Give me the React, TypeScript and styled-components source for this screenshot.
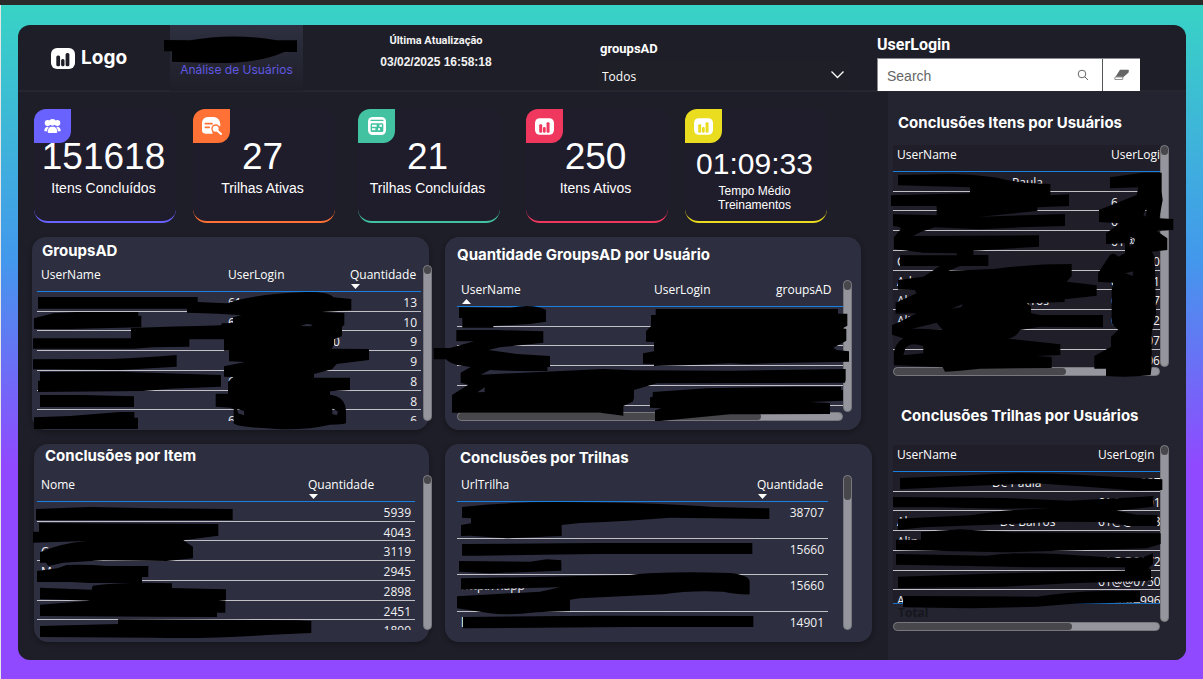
import React from "react";
import styled, { createGlobalStyle } from "styled-components";

const GlobalStyle = createGlobalStyle`
  *, *::before, *::after { box-sizing: border-box; }
  body {
    margin: 0;
    background: #2a2a2a;
    color: #ffffff;
    font-family: "Open Sans", "Noto Sans", sans-serif;
    font-size: 12px;
  }
  h1, h2, p { margin: 0; }
`;

const sans = `"Liberation Sans", Arial, sans-serif`;
const inter = `Inter, "Liberation Sans", sans-serif`;
const roboto = `Roboto, "Liberation Sans", sans-serif`;

const Backdrop = styled.div`
  margin-top: 5px;
  min-height: calc(100vh - 5px);
  padding: 20px 17px 19px;
  border-left: 1px solid #e6e6e6;
  background: linear-gradient(180deg, #38d3c5 0px, #4398ec 255px, #9049ff 460px, #9049ff 100%);
`;

const Dashboard = styled.div`
  position: relative;
  border-radius: 12px;
  background: #1e1e28;
  overflow: hidden;
`;

/* ---------- header ---------- */

const Header = styled.header`
  display: grid;
  grid-template-columns: 152px 133px minmax(200px, 1fr) 280px 263px;
  height: 67px;
  padding-right: 46px;
  border-bottom: 2px solid #252630;
`;

const Brand = styled.div`
  display: flex;
  align-items: center;
  gap: 6px;
  padding-left: 33px;
  font: 700 19px/24px ${inter};
`;

const PageBadge = styled.div`
  position: relative;
  padding-top: 36px;
  background: linear-gradient(180deg, #2e3040, #1e1e28);
  color: #6058e0;
  text-align: center;
`;

const PageName = styled.h1`
  font: 400 12px/18px ${inter};
  white-space: nowrap;
`;

const Updated = styled.div`
  padding: 6px 28px 0 0;
  text-align: center;
  color: #f2f2f2;
`;

const UpdatedLabel = styled.p`
  font: 700 11px/20px ${roboto};
`;

const UpdatedValue = styled.p`
  font: 700 12px/22px ${sans};
`;

const GroupFilter = styled.div`
  display: flex;
  flex-direction: column;
  padding: 12px 28px 0 0;
`;

const GroupLabel = styled.label`
  padding-left: 3px;
  font: 700 13px/24px ${roboto};
`;

const SelectBox = styled.div`
  position: relative;
`;

const Select = styled.select`
  display: block;
  width: 100%;
  height: 29px;
  padding: 2px 24px 0 5px;
  border: 0;
  appearance: none;
  background: #1f2027;
  color: #ffffff;
  font: 400 12px/18px "Open Sans", sans-serif;
`;

const SelectArrow = styled.svg`
  position: absolute;
  right: 4px;
  top: 9px;
  pointer-events: none;
`;

const LoginFilter = styled.div`
  padding-top: 7px;
`;

const LoginLabel = styled.label`
  display: block;
  font: 700 16px/26px ${roboto};
`;

const SearchBar = styled.form`
  display: flex;
  height: 33px;
  border: 1px solid #8a8a90;
  border-width: 1px 0 0 1px;
  background: #ffffff;
`;

const SearchInput = styled.input`
  flex: 1;
  min-width: 0;
  padding: 2px 0 0 9px;
  border: 0;
  background: transparent;
  color: #333333;
  font: 400 14px/20px ${sans};
  &::placeholder { color: #666666; opacity: 1; }
`;

const IconButton = styled.button<{ $width: number; $divided?: boolean }>`
  display: flex;
  align-items: center;
  justify-content: center;
  width: ${(p) => p.$width}px;
  padding: 0;
  border: 0;
  border-left: ${(p) => (p.$divided ? "1px solid #55555c" : "0")};
  background: transparent;
  color: #666666;
`;

/* ---------- body ---------- */

const Body = styled.div`
  display: grid;
  grid-template-columns: minmax(0, 1fr) 298px;
`;

const Main = styled.main`
  padding: 17px 0 18px;
`;

const Cards = styled.section`
  display: grid;
  grid-template-columns: 159fr 165fr 168fr 159fr 142fr;
  padding: 0 61px 0 16px;
`;

const Card = styled.article<{ $color: string; $compact?: boolean }>`
  position: relative;
  width: 142px;
  height: 114px;
  padding: ${(p) => (p.$compact ? 38 : 28)}px 3px 0 0;
  border-bottom: 2px solid ${(p) => p.$color};
  border-radius: 14px;
  background: #1f1c2b;
  text-align: center;
`;

const CardIcon = styled.div<{ $color: string }>`
  position: absolute;
  left: 0;
  top: 0;
  display: flex;
  align-items: center;
  justify-content: center;
  width: 37px;
  height: 34px;
  border-radius: 12px 0;
  background: ${(p) => p.$color};
`;

const CardValue = styled.p<{ $compact?: boolean }>`
  position: relative;
  font: 400 ${(p) => (p.$compact ? "30px/34px" : "37px/40px")} ${sans};
`;

const CardLabel = styled.h2<{ $compact?: boolean }>`
  margin: 3px auto 0;
  max-width: ${(p) => (p.$compact ? "90px" : "none")};
  font: 400 ${(p) => (p.$compact ? "12px/14px" : "14px/16px")} ${sans};
`;

const TopRow = styled.div`
  display: grid;
  grid-template-columns: 397fr 416fr;
  gap: 16px;
  margin-top: 14px;
  padding: 0 27px 0 14px;
`;

const BottomRow = styled.div`
  display: grid;
  grid-template-columns: 395fr 427fr;
  gap: 16px;
  margin-top: 14px;
  padding: 0 16px;
`;

const Panel = styled.section<{ $pad: string }>`
  position: relative;
  min-width: 0;
  padding: ${(p) => p.$pad};
  border-radius: 14px;
  background: #2d2f40;
  box-shadow: 0 2px 5px rgba(10, 10, 16, 0.45);
`;

const Sidebar = styled.aside`
  padding: 19px 17px 0 5px;
  background: #232430;
`;

const SideBlock = styled.section`
  position: relative;
  margin-bottom: 28px;
`;

const Title = styled.h2<{ $indent: number; $line: number; $gap: number }>`
  padding-left: ${(p) => p.$indent}px;
  margin-bottom: ${(p) => p.$gap}px;
  font: 700 15px/${(p) => p.$line}px ${inter};
  white-space: nowrap;
`;

/* ---------- tables ---------- */

const TableArea = styled.div<{ $gap: number; $bleed?: boolean }>`
  display: flex;
  gap: ${(p) => p.$gap}px;
  margin-right: ${(p) => (p.$bleed ? -3 : 0)}px;
`;

const TableColumn = styled.div`
  flex: 1;
  min-width: 0;
`;

const Viewport = styled.div<{ $height: number; $dark?: boolean }>`
  height: ${(p) => p.$height}px;
  overflow: hidden;
  background: ${(p) => (p.$dark ? "#1f1e29" : "transparent")};
`;

const Table = styled.table`
  width: 100%;
  border-collapse: separate;
  border-spacing: 0;
  table-layout: fixed;
`;

const Th = styled.th`
  height: 27px;
  padding: 0 4px;
  border-bottom: 1px solid #1a7fe0;
  font-weight: 400;
  line-height: 19px;
  text-align: left;
  vertical-align: top;
  white-space: nowrap;
`;

const SortMark = styled.svg`
  display: block;
  margin-left: 1px;
`;

const Row = styled.tr<{ $tall?: boolean }>`
  height: ${(p) => (p.$tall ? 37 : 20)}px;
  &:nth-child(4n + 2) { height: ${(p) => (p.$tall ? 36 : 19)}px; }
`;

const Td = styled.td<{ $right?: boolean }>`
  padding: 3px 4px 0;
  border-bottom: 1px solid #c0c0c5;
  line-height: 15px;
  text-align: ${(p) => (p.$right ? "right" : "left")};
  vertical-align: top;
  white-space: nowrap;
  overflow: hidden;
  color: #f1f1f3;
`;

const Fragment = styled.span<{ $gap: number }>`
  padding-left: ${(p) => p.$gap}px;
`;

const TotalRow = styled.div`
  height: 19px;
  padding-left: 5px;
  border-top: 1px solid #1b6fc0;
  color: #16161c;
  font-weight: 700;
  line-height: 18px;
`;

const Track = styled.div<{ $axis: "x" | "y" }>`
  flex: none;
  display: flex;
  width: ${(p) => (p.$axis === "y" ? "9px" : "100%")};
  height: ${(p) => (p.$axis === "x" ? "9px" : "auto")};
  border: 1px solid #77777d;
  border-radius: 5px;
  background: #95969d;
`;

const Thumb = styled.div<{ $axis: "x" | "y"; $size: string }>`
  width: ${(p) => (p.$axis === "x" ? p.$size : "7px")};
  height: ${(p) => (p.$axis === "y" ? p.$size : "7px")};
  border-radius: 4px;
  background: #47474c;
`;

const TrackCorner = styled.div`
  flex: none;
  width: 9px;
`;

const Marker = styled.svg`
  position: absolute;
  left: 0;
  top: 0;
  z-index: 2;
  overflow: visible;
  pointer-events: none;
`;

type Part = [number, string];
type Cell = string | Part[];
type Column = { name: string; width?: string; right?: boolean; sort?: "up" | "down" };

type DataTableProps = {
  columns: Column[];
  rows: Cell[][];
  height: number;
  gap: number;
  thumb: string;
  bleed?: boolean;
  tall?: boolean;
  dark?: boolean;
  total?: boolean;
  xThumb?: string;
};

function DataTable({ columns, rows, height, gap, thumb, bleed, tall, dark, total, xThumb }: DataTableProps) {
  return (
    <>
      <TableArea $gap={gap} $bleed={bleed}>
        <TableColumn>
          <Viewport $height={height} $dark={dark}>
            <Table>
              <colgroup>
                {columns.map((c) => (
                  <col key={c.name} width={c.width} />
                ))}
              </colgroup>
              <thead>
                <tr>
                  {columns.map((c) => (
                    <Th key={c.name} scope="col">
                      {c.name}
                      {c.sort && (
                        <SortMark width="9" height="5" viewBox="0 0 9 5" aria-hidden="true">
                          <path d={c.sort === "down" ? "M0 0H9L4.5 5Z" : "M0 5H9L4.5 0Z"} fill="#fff" />
                        </SortMark>
                      )}
                    </Th>
                  ))}
                </tr>
              </thead>
              <tbody>
                {rows.map((row, r) => (
                  <Row key={r} $tall={tall}>
                    {columns.map((c, i) => {
                      const cell = row[i] ?? "";
                      return (
                        <Td key={c.name} $right={c.right}>
                          {typeof cell === "string"
                            ? cell
                            : cell.map(([g, text], k) => (
                                <Fragment key={k} $gap={g}>
                                  {text}
                                </Fragment>
                              ))}
                        </Td>
                      );
                    })}
                  </Row>
                ))}
              </tbody>
            </Table>
          </Viewport>
          {total && <TotalRow>Total</TotalRow>}
        </TableColumn>
        <Track $axis="y" aria-hidden="true">
          <Thumb $axis="y" $size={thumb} />
        </Track>
      </TableArea>
      {xThumb && (
        <TableArea $gap={gap} aria-hidden="true">
          <TableColumn>
            <Track $axis="x">
              <Thumb $axis="x" $size={xThumb} />
            </Track>
          </TableColumn>
          <TrackCorner />
        </TableArea>
      )}
    </>
  );
}

function Redaction({ width, height, view, paths }: { width: number; height: number; view: string; paths: string[] }) {
  return (
    <Marker width={width} height={height} viewBox={view} aria-hidden="true">
      {paths.map((d, i) => (
        <path key={i} d={d} fill="#000" fillRule="evenodd" />
      ))}
    </Marker>
  );
}

/* ---------- icons ---------- */

function BarsMark({ width, height, bars }: { width: number; height: number; bars: string }) {
  return (
    <svg width={width} height={height} viewBox="0 0 24 21" aria-hidden="true">
      <rect width="24" height="21" rx="6" fill="#fff" />
      <rect x="5.3" y="7.5" width="3.8" height="10.8" rx="1.5" fill={bars} />
      <rect x="10.1" y="11" width="3.4" height="7.3" rx="1.5" fill={bars} />
      <rect x="14.6" y="5" width="3.8" height="13.3" rx="1.5" fill={bars} />
    </svg>
  );
}

function PeopleIcon() {
  return (
    <svg width="17" height="14" viewBox="0 0 49 42" fill="#fff" aria-hidden="true">
      <circle cx="10" cy="12" r="9" />
      <circle cx="39" cy="12" r="9" />
      <circle cx="24.5" cy="10" r="10" />
      <path d="M0 36Q0 24 9 23L13 24Q9 29 8 37H2Q0 37 0 36Z" />
      <path d="M49 36Q49 24 40 23L36 24Q40 29 41 37H47Q49 37 49 36Z" />
      <path d="M10 38Q11 26 19 23H30Q38 26 39 38Q39 42 35 42H14Q10 42 10 38Z" />
    </svg>
  );
}

function SearchDocIcon({ color }: { color: string }) {
  return (
    <svg width="20" height="18" viewBox="0 0 60 54" aria-hidden="true">
      <path d="M0 20Q0 0 18 0H36Q54 2 55 22V28H34Q28 34 32 50H10Q0 50 0 40Z" fill="#fff" />
      <path d="M10 20H30M10 31H22" stroke={color} strokeWidth="5" strokeLinecap="round" />
      <circle cx="41" cy="35" r="13" fill={color} />
      <circle cx="41" cy="35" r="9" fill="#fff" />
      <path d="M47 42L57 51" stroke="#fff" strokeWidth="6" strokeLinecap="round" />
    </svg>
  );
}

function BoardIcon({ color }: { color: string }) {
  return (
    <svg width="18" height="18" viewBox="0 0 54 54" aria-hidden="true">
      <rect width="54" height="54" rx="14" fill="#fff" />
      <path d="M9 10H45" stroke={color} strokeWidth="4" strokeLinecap="round" />
      <rect x="8" y="19" width="38" height="26" rx="4" fill={color} />
      <path d="M12 26H26M34 26H42M12 37H22M30 37H36" stroke="#fff" strokeWidth="6" />
    </svg>
  );
}

/* ---------- data ---------- */

const groupRows: Cell[][] = [
  ["", "61", "13"],
  ["", "6", "10"],
  ["", [[105, "0"]], "9"],
  ["", "", "9"],
  ["", "6", "8"],
  ["", "", "8"],
  ["", "6", "6"],
];

const userGroupRows: Cell[][] = [[], [], [], [], [], []];

const itemRows: Cell[][] = [
  ["", "5939"],
  ["", "4043"],
  ["C", "3119"],
  ["Ma", "2945"],
  ["", "2898"],
  ["", "2451"],
  ["", "1809"],
];

const trailRows: Cell[][] = [
  ["", "38707"],
  ["", "15660"],
  [[[0, "http://happ"]], "15660"],
  ["l", "14901"],
];

const itemUserRows: Cell[][] = [
  [[[115, "Paula"]], ""],
  ["", "6"],
  ["", "61@@04"],
  ["", "61@@02"],
  ["C", "61@@20"],
  ["Ad", "61@@11"],
  [[[0, "Al"], [112, "arros"]], "61@@37"],
  ["Ali", "61@@02"],
  ["", "61@@07"],
  ["", "61@@06"],
];

const trailUserRows: Cell[][] = [
  [[[95, "De Paula"]], "61@@0027"],
  ["", "61@@0091"],
  [[[0, "Al"], [92, "De Barros"]], "61@@0008"],
  ["Alin", ""],
  ["", "61@@0172"],
  ["", "61@@0750"],
  ["A", "61@@4996"],
];

const marks = {
  header: ["M492 120L570 121Q700 98 830 121H891V156H852Q780 190 640 189L516 185V154H492Z"],
  groups: [
    "M54 201H533V216L620 220Q700 192 860 186Q930 186 940 202L994 207V241L905 246L973 249V284L966 290V318L942 328V345L934 356L1047 357V390L950 402L936 418L882 432V443L990 443V480L930 484V494Q978 500 978 545V580Q970 584 930 584Q850 602 760 596Q650 592 641 580V536H634V533L587 530V491H624V455L640 442L612 440V409L675 396L627 394V362L612 362V328L508 328V350L400 352L340 356H39V325H333V294Q460 290 603 286L606 280L639 279V262L665 256Q600 250 501 248V236H54ZM652 537L672 543V556L654 550ZM937 535L954 545L950 556L937 552ZM842 288L860 282L878 284L872 289Z",
    "M42 265L100 250L170 246H355V257H364V292L150 297H42Z",
    "M39 388L270 387Q380 383 470 375V410L300 420L100 418H39Z",
    "M60 426L300 425L603 435V470L450 476L370 483L54 486V452H60Z",
    "M60 495H190L342 499V531H60Z",
    "M42 562L150 558L300 546H343V563H354V597H42Z",
  ],
  userGroups: [
    "M87 232L240 234Q310 220 348 240V275L300 282L190 288V293H97V264H87Z",
    "M79 300H200L340 304V338L210 352L175 360L260 372L360 378V411H352V423Q250 424 180 420L152 434L520 417L610 421L900 422L1247 417V450L1245 458L680 460L645 470L612 480V505L608 515L580 528V557L540 552L510 548H66V495L115 464L92 458V428L122 411Q60 405 48 388H11V354H60L132 334H79ZM142 487L164 472V486Z",
    "M677 237H1224V251H1252V287L1238 295L1249 297V332L1210 353L1220 360L1257 364V395L1050 399L950 402L900 400L780 405L672 408V402L639 401V370L672 364V336L648 335V304L663 288V255H677Z",
    "M668 486L830 475L1100 470H1233V480H1239V512L1140 516L1200 519V552L900 553L690 573H675V541L694 535L660 533V502L668 500Z",
  ],
  items: [
    "M48 222L210 216L400 220L638 222V255H48Z",
    "M57 264L595 267V302L490 316L519 335V370L440 378L250 376L130 383L85 393L78 383H60V352Q120 325 200 318L39 323V290H57Z",
    "M51 408L112 400L140 390Q200 388 260 393H385V426H366V444H210L150 441H51Z",
    "M60 458L215 464L218 452Q320 440 456 445V459L618 463V496L595 498H616V533H591V546L400 545L60 543V509L210 497L60 492Z",
    "M60 573L294 567V553L570 554L830 556L874 558V594L740 600Q560 612 400 608L60 606Z",
  ],
  trails: [
    "M96 216Q250 198 450 202Q700 204 850 216L1018 220V252L850 250L720 248Q600 258 450 264L395 270V303L230 310L120 302L93 303V270L123 265V250L96 248Z",
    "M96 327L500 324L967 324V357H500L150 362H96Z",
    "M87 378L300 380L350 373L394 376V407L180 415L87 410Z",
    "M93 430L600 420Q700 408 900 414Q958 420 959 440V478Q930 480 880 470Q780 465 700 478L450 490L420 494V528L320 532Q230 542 180 535L81 520V484L330 470L390 457L93 464Z",
    "M99 546L500 542L970 543V576H600L99 580Z",
  ],
  itemUsers: [
    "M54 225L220 222Q330 226 380 240L430 248L511 252V286L470 288L567 283V318L472 322V333L300 350L555 342V378L420 382L300 388L165 382Q120 395 100 408L477 406V440L280 452V465H325V498H240L205 512L340 507Q450 492 575 492V528L560 545L650 556V587L554 598V606L440 610L453 620V640L480 645H669V682L480 680L420 690Q410 710 385 716L541 733V765L470 768L515 771V804L300 806L240 812L195 815L188 802L42 795V760Q45 730 70 715L36 704V676L70 660L110 640L47 641V608L110 580L104 570L54 569V540L130 530L180 498H60V466H230V460L130 458L42 447V412L60 390Q70 380 39 378V343L170 346V318H33V286L270 280V262L54 256ZM76 745Q90 725 130 738V760L70 766ZM215 626L248 612L244 622ZM96 686L170 668L186 688Z",
    "M690 232L790 218L845 218V275L848 300L838 355L880 357V390L830 393L862 415V450L815 455L824 470L828 640L815 700V800L812 825Q750 833 678 828V806H643V768L693 740V710L715 690L695 670V570L700 548L654 545V520L690 465Q700 455 715 470L735 460V430L678 432V400L720 370L657 366V330L770 285L775 262L690 265ZM752 412L766 416L760 434L748 438ZM790 345L800 322L798 350ZM736 520L760 514L758 528Z",
  ],
  trailUsers: [
    "M90 264L300 256Q450 244 620 254L760 262L877 268V300L800 302L650 290L500 280L300 288L90 298Z",
    "M69 321L400 324L600 332L820 320L850 318V350L740 362L800 374L862 375V408L780 408L700 396L560 395L420 402L160 412L84 420V386L300 376L400 362L540 354L400 356L200 352H69Z",
    "M153 426L270 418L420 427L872 430V462L830 475L400 487L78 480V449H153Z",
    "M78 492L350 497Q450 485 560 492L750 504L820 502L849 490V522L835 535L843 538V572L600 580L400 590L84 594V560L400 550L765 542V532L500 532L300 528L78 524Z",
    "M99 618L500 620Q600 605 700 603H810V637L600 642L500 650L300 655L99 652Z",
  ],
};

const cards = [
  { value: "151618", label: "Itens Concluídos", color: "#6a62ff", icon: <PeopleIcon /> },
  { value: "27", label: "Trilhas Ativas", color: "#ff7134", icon: <SearchDocIcon color="#ff7134" /> },
  { value: "21", label: "Trilhas Concluídas", color: "#42c2a0", icon: <BoardIcon color="#42c2a0" /> },
  { value: "250", label: "Itens Ativos", color: "#f0385e", icon: <BarsMark width={19} height={17} bars="#f0385e" /> },
  {
    value: "01:09:33",
    label: "Tempo Médio Treinamentos",
    color: "#eadc1e",
    icon: <BarsMark width={19} height={17} bars="#eadc1e" />,
    compact: true,
  },
];

export default function App() {
  return (
    <>
      <GlobalStyle />
      <Backdrop>
        <Dashboard>
          <Header>
            <Brand>
              <BarsMark width={24} height={21} bars="#1e1e28" />
              Logo
            </Brand>
            <PageBadge>
              <PageName>Análise de Usuários</PageName>
              <Redaction width={133} height={66} view="510 75 399 198" paths={marks.header} />
            </PageBadge>
            <Updated>
              <UpdatedLabel>Última Atualização</UpdatedLabel>
              <UpdatedValue>03/02/2025 16:58:18</UpdatedValue>
            </Updated>
            <GroupFilter>
              <GroupLabel htmlFor="groups">groupsAD</GroupLabel>
              <SelectBox>
                <Select id="groups" defaultValue="Todos">
                  <option>Todos</option>
                </Select>
                <SelectArrow width="15" height="9" viewBox="0 0 15 9" aria-hidden="true">
                  <path d="M1.5 1.5L7.5 7.5L13.5 1.5" fill="none" stroke="#fff" strokeWidth="1.3" />
                </SelectArrow>
              </SelectBox>
            </GroupFilter>
            <LoginFilter>
              <LoginLabel htmlFor="login">UserLogin</LoginLabel>
              <SearchBar onSubmit={(e) => e.preventDefault()}>
                <SearchInput id="login" type="text" placeholder="Search" />
                <IconButton type="submit" $width={38} aria-label="Search">
                  <svg width="12" height="12" viewBox="0 0 12 12" aria-hidden="true">
                    <circle cx="5" cy="5" r="3.8" fill="none" stroke="currentColor" />
                    <path d="M7.8 7.8L11 11" stroke="currentColor" />
                  </svg>
                </IconButton>
                <IconButton type="reset" $width={38} $divided aria-label="Clear">
                  <svg width="15" height="12" viewBox="0 0 15 12" aria-hidden="true">
                    <path d="M1 8L9 8L14 3.5L14.3 1L9 7.5L8.7 10.5H0.8Z" fill="#fff" stroke="#777" strokeWidth="0.8" />
                    <path d="M6 0.8H14.5V3.5L9.4 7.8H1.5Z" fill="#666" />
                  </svg>
                </IconButton>
              </SearchBar>
            </LoginFilter>
          </Header>

          <Body>
            <Main>
              <Cards>
                {cards.map((c) => (
                  <Card key={c.label} $color={c.color} $compact={c.compact}>
                    <CardIcon $color={c.color}>{c.icon}</CardIcon>
                    <CardValue $compact={c.compact}>{c.value}</CardValue>
                    <CardLabel $compact={c.compact}>{c.label}</CardLabel>
                  </Card>
                ))}
              </Cards>

              <TopRow>
                <Panel $pad="0 0 9px 5px">
                  <Title $indent={5} $line={28} $gap={0}>GroupsAD</Title>
                  <DataTable
                    columns={[
                      { name: "UserName" },
                      { name: "UserLogin", width: "122" },
                      { name: "Quantidade", width: "75", right: true, sort: "down" },
                    ]}
                    rows={groupRows}
                    height={156}
                    gap={2}
                    thumb="8px"
                    bleed
                  />
                  <Redaction width={397} height={193} view="36 21 1191 579" paths={marks.groups} />
                </Panel>
                <Panel $pad="0 9px 9px 12px">
                  <Title $indent={0} $line={35} $gap={8}>Quantidade GroupsAD por Usuário</Title>
                  <DataTable
                    columns={[
                      { name: "UserName", sort: "up" },
                      { name: "UserLogin", width: "122" },
                      { name: "groupsAD", width: "71" },
                    ]}
                    rows={userGroupRows}
                    height={132}
                    gap={0}
                    thumb="9px"
                    xThumb="79%"
                  />
                  <Redaction width={416} height={193} view="45 21 1248 579" paths={marks.userGroups} />
                </Panel>
              </TopRow>

              <BottomRow>
                <Panel $pad="0 0 12px 3px">
                  <Title $indent={8} $line={24} $gap={7}>Conclusões por Item</Title>
                  <DataTable
                    columns={[{ name: "Nome" }, { name: "Quantidade", width: "111", right: true, sort: "down" }]}
                    rows={itemRows}
                    height={155}
                    gap={8}
                    thumb="8px"
                    bleed
                  />
                  <Redaction width={395} height={198} view="42 27 1185 594" paths={marks.items} />
                </Panel>
                <Panel $pad="0 20px 12px 12px">
                  <Title $indent={3} $line={28} $gap={3}>Conclusões por Trilhas</Title>
                  <DataTable
                    columns={[{ name: "UrlTrilha" }, { name: "Quantidade", width: "75", right: true, sort: "down" }]}
                    rows={trailRows}
                    height={155}
                    gap={15}
                    thumb="24px"
                    tall
                  />
                  <Redaction width={427} height={198} view="45 27 1281 594" paths={marks.trails} />
                </Panel>
              </BottomRow>
            </Main>

            <Sidebar>
              <SideBlock>
                <Title $indent={5} $line={24} $gap={10}>Conclusões Itens por Usuários</Title>
                <DataTable
                  columns={[{ name: "UserName" }, { name: "UserLogin", width: "53" }]}
                  rows={itemUserRows}
                  height={222}
                  gap={0}
                  thumb="9px"
                  xThumb="65%"
                  dark
                />
                <Redaction width={276} height={265} view="39 33 828 795" paths={marks.itemUsers} />
              </SideBlock>
              <SideBlock>
                <Title $indent={8} $line={24} $gap={17}>Conclusões Trilhas por Usuários</Title>
                <DataTable
                  columns={[{ name: "UserName" }, { name: "UserLogin", width: "66" }]}
                  rows={trailUserRows}
                  height={158}
                  gap={0}
                  thumb="9px"
                  xThumb="67%"
                  dark
                  total
                />
                <Redaction width={276} height={227} view="69 42 828 681" paths={marks.trailUsers} />
              </SideBlock>
            </Sidebar>
          </Body>
        </Dashboard>
      </Backdrop>
    </>
  );
}
